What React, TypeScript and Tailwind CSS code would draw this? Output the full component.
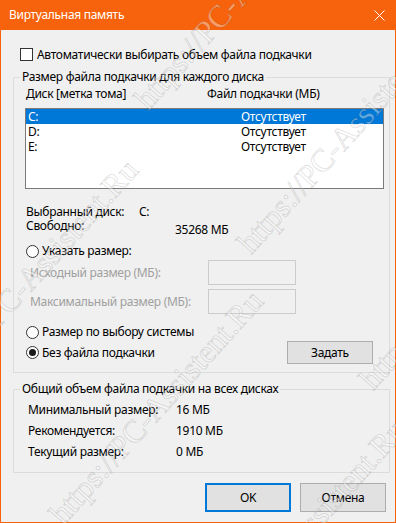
function Radio({ checked }: { checked?: boolean }) {
  return (
    <span className="flex h-[13px] w-[13px] shrink-0 items-center justify-center rounded-full border border-[#333333] bg-white">
      {checked && <span className="h-[7px] w-[7px] rounded-full bg-[#1a1a1a]" />}
    </span>
  );
}

const marks = [
  "left-[140px] top-[88px]",
  "left-[-70px] top-[372px]",
  "left-[243px] top-[232px]",
  "left-[55px] top-[503px]",
  "left-[198px] top-[632px]",
  "left-[365px] top-[368px]",
];

function App() {
  return (
    <div className="relative flex h-[523px] w-[396px] flex-col overflow-hidden font-['Noto_Sans',sans-serif] text-[12px] leading-[16px] tracking-[-0.3px] text-black">
      <div className="flex h-[30px] shrink-0 items-center justify-between bg-[#f7630c] pl-[9px] pr-[10px] text-white">
        <span>Виртуальная память</span>
        <svg width="11" height="11" viewBox="0 0 11 11" className="mr-[1px]">
          <path d="M0.5 0.5L10.5 10.5M10.5 0.5L0.5 10.5" stroke="white" strokeWidth="1" />
        </svg>
      </div>

      <div className="flex flex-1 flex-col border-x border-b border-[#f7630c] bg-[#f0f0f0]">
        <label className="ml-[19px] mt-[18px] flex h-[13px] items-center gap-[4px]">
          <span className="h-[13px] w-[13px] border border-[#333333] bg-white" />
          <span>Автоматически выбирать объем файла подкачки</span>
        </label>

        <fieldset className="ml-[12px] mr-[5px] mt-[8px] h-[304px] border border-[#dcdcdc]">
          <legend className="ml-[6px] px-[2px]">Размер файла подкачки для каждого диска</legend>
          <div className="mt-[1px] flex pl-[12px]">
            <span className="w-[181px]">Диск [метка тома]</span>
            <span>Файл подкачки (МБ)</span>
          </div>

          <div className="ml-[11px] mt-[6px] h-[81px] w-[359px] border border-[#7a7a7a] bg-white">
            {[
              ["C:", true],
              ["D:", false],
              ["E:", false],
            ].map(([d, sel]) => (
              <div
                key={d as string}
                className={`flex h-[15px] items-center pl-[2px] ${sel ? "bg-[#0078d7] text-white" : ""}`}
              >
                <span className="w-[213px]">{d}</span>
                <span>Отсутствует</span>
              </div>
            ))}
          </div>

          <div className="mt-[16px] flex h-[14px] items-center pl-[12px]">
            <span className="w-[113px]">Выбранный диск:</span>
            <span>C:</span>
          </div>
          <div className="flex pl-[12px]">
            <span className="h-[14px] w-[149px] leading-[14px]">Свободно:</span>
            <span className="mt-[4px] h-[14px] leading-[14px]">35268 МБ</span>
          </div>

          <label className="mt-[6px] flex h-[16px] items-center gap-[3px] pl-[12px]">
            <Radio />
            <span>Указать размер:</span>
          </label>
          <div className="mt-[1px] flex h-[25px] items-center pl-[16px] text-[#a0a0a0]">
            <span className="w-[178px]">Исходный размер (МБ):</span>
            <span className="h-[25px] w-[88px] border border-[#cccccc] bg-[#f0f0f0]" />
          </div>
          <div className="mt-[4px] flex h-[25px] items-center pl-[16px] text-[#a0a0a0]">
            <span className="w-[178px]">Максимальный размер (МБ):</span>
            <span className="h-[25px] w-[88px] border border-[#cccccc] bg-[#f0f0f0]" />
          </div>

          <label className="mt-[10px] flex h-[16px] items-center gap-[3px] pl-[12px]">
            <Radio />
            <span>Размер по выбору системы</span>
          </label>
          <div className="mt-[1px] flex h-[23px] items-center pl-[12px] pr-[16px]">
            <label className="flex items-center gap-[3px]">
              <Radio checked />
              <span>Без файла подкачки</span>
            </label>
            <button className="ml-auto h-[23px] w-[86px] border border-[#adadad] bg-[#e1e1e1]">Задать</button>
          </div>
        </fieldset>

        <fieldset className="ml-[12px] mr-[5px] mt-[8px] h-[92px] border border-[#dcdcdc]">
          <legend className="ml-[6px] px-[2px]">Общий объем файла подкачки на всех дисках</legend>
          <div className="mt-[5px] flex flex-col gap-[5px] pl-[14px]">
            <div className="flex">
              <span className="w-[148px]">Минимальный размер:</span>
              <span>16 МБ</span>
            </div>
            <div className="flex">
              <span className="w-[148px]">Рекомендуется:</span>
              <span>1910 МБ</span>
            </div>
            <div className="flex">
              <span className="w-[148px]">Текущий размер:</span>
              <span>0 МБ</span>
            </div>
          </div>
        </fieldset>

        <div className="mt-[10px] flex justify-end gap-[9px] pr-[9px]">
          <button className="h-[29px] w-[86px] border-2 border-[#0078d7] bg-[#e1e1e1]">OK</button>
          <button className="h-[29px] w-[86px] border border-[#adadad] bg-[#e1e1e1]">Отмена</button>
        </div>
      </div>

      {/* водяной знак */}
      <div className="pointer-events-none absolute inset-0">
        {marks.map((m) => (
          <span
            key={m}
            className={`absolute ${m} origin-left -rotate-[48deg] whitespace-nowrap font-['Liberation_Serif',serif] text-[32px] leading-[32px] tracking-normal text-white/40 [-webkit-text-stroke:1px_rgba(0,0,0,0.13)]`}
          >
            https://PC-Assistent.Ru
          </span>
        ))}
      </div>
    </div>
  );
}

export default App;
